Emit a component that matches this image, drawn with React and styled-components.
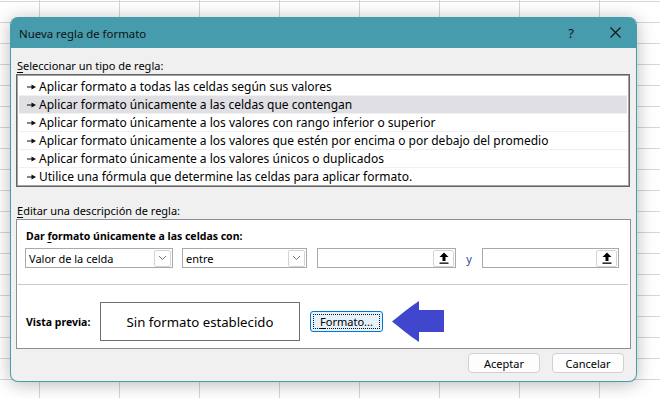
import React from "react";
import styled, { createGlobalStyle } from "styled-components";

const Global = createGlobalStyle`
  html, body { margin: 0; padding: 0; }
  body {
    width: 660px; height: 398px; overflow: hidden;
    font-family: "Noto Sans", "Open Sans", sans-serif;
    background-color: #ffffff;
    background-image:
      linear-gradient(to right, transparent 39px, #d6d6d6 39px, #d6d6d6 40px, transparent 40px),
      linear-gradient(to bottom, transparent 1px, #d6d6d6 1px, #d6d6d6 2px, transparent 2px);
    background-size: 80px 100%, 100% 21px;
  }
`;

const Page = styled.div`
  padding: 17px 0 0 10px;
`;

const Dialog = styled.div`
  width: 627px;
  height: 365px;
  box-sizing: border-box;
  display: flex;
  flex-direction: column;
  background: #f0f0f0;
  border: 1px solid #469bac;
  border-top: none;
  border-radius: 8px;
  overflow: hidden;
  box-shadow: 0 2px 18px rgba(0, 0, 0, 0.28);
`;

const TitleBar = styled.div`
  height: 31px;
  flex: none;
  display: flex;
  align-items: center;
  background: #469bac;
  margin: 0 -1px;
  color: #111;
`;

const Title = styled.div`
  flex: 1;
  padding-left: 9px;
  font-size: 11.4px;
  padding-top: 1px;
`;

const CaptionBtn = styled.div`
  width: 44px;
  height: 31px;
  display: flex;
  align-items: center;
  justify-content: center;
  font-size: 13px;
  color: #111;
`;

const Body = styled.div`
  flex: 1;
  display: flex;
  flex-direction: column;
  padding: 10px 5px 0 5px;
`;

const Label = styled.div`
  font-size: 11px;
  line-height: 16px;
  height: 16px;
  padding-left: 1px;
  margin-top: ${(p) => p.$mt || 0}px;
  color: #000;
  u { text-decoration: underline; text-underline-offset: 2px; }
`;

const ListBox = styled.div`
  height: 113px;
  box-sizing: border-box;
  width: 614px;
  background: #fff;
  border: 1px solid #646464;
  box-shadow: inset 0 0 0 1px #a3a3a3;
  padding: 3px 2px 0 2px;
`;

const Row = styled.div`
  height: 18px;
  box-sizing: border-box;
  display: flex;
  align-items: center;
  padding-left: 8px;
  gap: 3px;
  font-size: 12px;
  color: #000;
  background: ${(p) => (p.$sel ? "#e0e0e4" : "transparent")};
  border-bottom: 1px solid ${(p) => (p.$last ? "transparent" : "#f0f0f0")};
`;

const Group = styled.div`
  width: 615px;
  height: 130px;
  box-sizing: border-box;
  background: #fff;
  border: 1px solid #8e8e94;
  display: flex;
  flex-direction: column;
  padding: 8px 0 0 8px;
`;

const Bold = styled.div`
  font-size: 10.5px;
  font-weight: 700;
  line-height: 16px;
  height: 16px;
  padding-left: 1px;
  u { text-decoration: underline; text-underline-offset: 2px; }
`;

const Controls = styled.div`
  display: flex;
  align-items: center;
  margin-top: 4px;
  height: 20px;
`;

const Combo = styled.div`
  width: ${(p) => p.$w}px;
  margin-right: ${(p) => p.$mr || 0}px;
  height: 20px;
  box-sizing: border-box;
  border: 1px solid #a9a9a9;
  background: #fff;
  display: flex;
  align-items: center;
  justify-content: space-between;
  padding: 0 1px 0 3px;
  font-size: 11px;
`;

const MiniBtn = styled.div`
  width: ${(p) => p.$w}px;
  height: 17px;
  box-sizing: border-box;
  border: 1px solid #d4d4d4;
  border-radius: 2px;
  background: #fff;
  display: flex;
  align-items: center;
  justify-content: center;
`;

const And = styled.div`
  width: 26px;
  text-align: center;
  font-size: 11px;
  color: #2c4a9c;
`;

const Separator = styled.div`
  height: 1px;
  background: #c9c9c9;
  margin: 16px 2px 0 -7px;
`;

const PreviewRow = styled.div`
  display: flex;
  align-items: center;
  margin-top: 16px;
`;

const PreviewLabel = styled.div`
  width: 74px;
  font-size: 10.5px;
  font-weight: 700;
  padding-left: 1px;
`;

const PreviewBox = styled.div`
  width: 200px;
  height: 39px;
  box-sizing: border-box;
  border: 1px solid #6e6e6e;
  display: flex;
  align-items: center;
  justify-content: center;
  font-size: 13.2px;
  color: #000;
`;

const FormatBtn = styled.div`
  margin-left: 10px;
  width: 73px;
  height: 21px;
  box-sizing: border-box;
  border: 1px solid #0078d7;
  border-radius: 3px;
  background: #e5f1fb;
  padding: 2px;
  display: flex;
`;

const Focus = styled.div`
  flex: 1;
  border: 1px dotted #111;
  display: flex;
  align-items: center;
  justify-content: center;
  font-size: 11px;
  u { text-decoration: underline; text-underline-offset: 2px; }
`;

const ArrowWrap = styled.div`
  margin-left: 9px;
  display: flex;
`;

const Footer = styled.div`
  display: flex;
  justify-content: flex-end;
  gap: 12px;
  margin-top: 4px;
  padding-right: 7px;
`;

const Btn = styled.div`
  width: 72px;
  height: 20px;
  box-sizing: border-box;
  border: 1px solid #d0d0d0;
  border-radius: 4px;
  background: #fdfdfd;
  display: flex;
  align-items: center;
  justify-content: center;
  font-size: 11px;
  color: #000;
`;

const Pointer = () => (
  <svg width="9" height="6" viewBox="0 0 9 6">
    <path d="M0 2.4h4.5V0.6L9 3 4.5 5.4V3.6H0z" fill="#111" />
  </svg>
);

const Chevron = () => (
  <svg width="9" height="6" viewBox="0 0 9 6">
    <path d="M1 1l3.5 3.5L8 1" fill="none" stroke="#7a7a7a" strokeWidth="1" />
  </svg>
);

const UpArrow = () => (
  <svg width="10" height="12" viewBox="0 0 10 12">
    <path d="M5 0.5L9.5 5H6.5V9H3.5V5H0.5z" fill="#000" />
    <rect x="0.5" y="10.5" width="9" height="1.3" fill="#000" />
  </svg>
);

const BigArrow = () => (
  <svg width="53" height="41" viewBox="0 0 53 41">
    <path
      d="M0 20.5 C8 14 18 6 27 0 V9 H52 V31 H27 V41 C18 35 8 27 0 20.5z"
      fill="#4147cd"
    />
  </svg>
);

const rules = [
  "Aplicar formato a todas las celdas según sus valores",
  "Aplicar formato únicamente a las celdas que contengan",
  "Aplicar formato únicamente a los valores con rango inferior o superior",
  "Aplicar formato únicamente a los valores que estén por encima o por debajo del promedio",
  "Aplicar formato únicamente a los valores únicos o duplicados",
  "Utilice una fórmula que determine las celdas para aplicar formato.",
];

export default function App() {
  return (
    <>
      <Global />
      <Page>
        <Dialog>
          <TitleBar>
            <Title>Nueva regla de formato</Title>
            <CaptionBtn>?</CaptionBtn>
            <CaptionBtn>
              <svg width="11" height="11" viewBox="0 0 11 11">
                <path d="M0.5 0.5l10 10M10.5 0.5l-10 10" stroke="#111" strokeWidth="1.1" />
              </svg>
            </CaptionBtn>
          </TitleBar>
          <Body>
            <Label>
              <u>S</u>eleccionar un tipo de regla:
            </Label>
            <ListBox>
              {rules.map((r, i) => (
                <Row key={i} $sel={i === 1} $last={i === rules.length - 1}>
                  <Pointer />
                  <span>{r}</span>
                </Row>
              ))}
            </ListBox>
            <Label $mt={16}>
              <u>E</u>ditar una descripción de regla:
            </Label>
            <Group>
              <Bold>
                Dar <u>f</u>ormato únicamente a las celdas con:
              </Bold>
              <Controls>
                <Combo $w={148} $mr={9}>
                  <span>Valor de la celda</span>
                  <MiniBtn $w={17}>
                    <Chevron />
                  </MiniBtn>
                </Combo>
                <Combo $w={125} $mr={10}>
                  <span>entre</span>
                  <MiniBtn $w={17}>
                    <Chevron />
                  </MiniBtn>
                </Combo>
                <Combo $w={139}>
                  <span />
                  <MiniBtn $w={21}>
                    <UpArrow />
                  </MiniBtn>
                </Combo>
                <And>y</And>
                <Combo $w={137}>
                  <span />
                  <MiniBtn $w={21}>
                    <UpArrow />
                  </MiniBtn>
                </Combo>
              </Controls>
              <Separator />
              <PreviewRow>
                <PreviewLabel>Vista previa:</PreviewLabel>
                <PreviewBox>Sin formato establecido</PreviewBox>
                <FormatBtn>
                  <Focus>
                    <span>
                      <u>F</u>ormato...
                    </span>
                  </Focus>
                </FormatBtn>
                <ArrowWrap>
                  <BigArrow />
                </ArrowWrap>
              </PreviewRow>
            </Group>
            <Footer>
              <Btn>Aceptar</Btn>
              <Btn>Cancelar</Btn>
            </Footer>
          </Body>
        </Dialog>
      </Page>
    </>
  );
}
